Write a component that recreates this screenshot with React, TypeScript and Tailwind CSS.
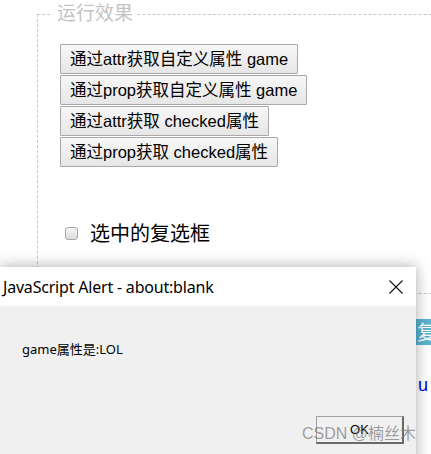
import React from "react";

const buttons = [
  "通过attr获取自定义属性 game",
  "通过prop获取自定义属性 game",
  "通过attr获取 checked属性",
  "通过prop获取 checked属性",
];

const cjk = { fontFamily: '"Liberation Sans", Arial, "Noto Sans CJK SC", sans-serif' };
const ui = { fontFamily: '"Noto Sans", "Open Sans", "Noto Sans CJK SC", sans-serif' };

export default function App() {
  return (
    <div className="relative w-[431px] h-[454px] overflow-hidden bg-white" style={cjk}>
      {/* page behind the alert */}
      <fieldset className="ml-[37px] mt-[2px] w-[460px] h-[292px] border border-dashed border-[#c8c8c8]">
        <legend className="ml-[15px] px-[4px] text-[19px] leading-[24px] text-[#c4c4c4]">运行效果</legend>
        <div className="pl-[22px] pt-[18px]">
          <div className="flex flex-col items-start gap-[1px]">
            {buttons.map((b) => (
              <button
                key={b}
                className="h-[30px] px-[9px] text-[16.5px] text-black border border-[#a9a9a9] bg-gradient-to-b from-[#f7f7f7] to-[#e6e6e6] rounded-[1px]"
              >
                {b}
              </button>
            ))}
          </div>
          <label className="flex items-center mt-[52px] ml-[5px] gap-[12px]">
            <span className="w-[13px] h-[13px] rounded-[3px] border border-[#a8a8a8] bg-gradient-to-b from-[#f4f4f4] to-[#dcdcdc]" />
            <span className="text-[20px] leading-[28px] text-black" style={{ fontFamily: '"Noto Sans CJK SC", sans-serif' }}>
              选中的复选框
            </span>
          </label>
        </div>
      </fieldset>
      <div className="ml-[416px] mt-[25px] flex flex-col items-start">
        <div className="w-[30px] h-[26px] bg-[#5ab4d2] text-white text-[20px] leading-[26px] pl-[1px]" style={{ fontFamily: '"Noto Sans CJK SC", sans-serif' }}>复</div>
        <div className="mt-[30px] pl-[2px] text-[18px] leading-[20px] text-[#0000ee]">u</div>
      </div>

      {/* alert dialog */}
      <div className="absolute left-0 top-[267px] w-[416px] h-[200px] bg-[#f0f0f0] shadow-[0_0_14px_rgba(0,0,0,0.35)] flex flex-col" style={ui}>
        <div className="h-[39px] bg-white flex items-center justify-between pl-[3px] pr-[13px]">
          <span className="text-[16px] text-black tracking-[-0.2px]">JavaScript Alert - about:blank</span>
          <svg width="14" height="14" viewBox="0 0 14 14" className="mt-[1px]">
            <path d="M0.5 0.5 L13.5 13.5 M13.5 0.5 L0.5 13.5" stroke="#111" strokeWidth="1.1" fill="none" />
          </svg>
        </div>
        <div className="pl-[22px] pt-[35px] text-[13px] leading-[16px] text-black" style={{ fontFamily: '"Noto Sans", "Noto Sans CJK SC", sans-serif' }}>
          game属性是:LOL
        </div>
        <div className="flex justify-end pr-[12px] mt-[59px]">
          <button className="w-[88px] h-[28px] bg-[#f0f0f0] border border-[#a0a0a0] border-r-2 border-b-2 border-r-[#696969] border-b-[#696969] text-[13px] text-black" style={{ fontFamily: '"Liberation Sans", Arial, sans-serif' }}>
            OK
          </button>
        </div>
      </div>

      {/* watermark */}
      <div className="absolute left-[302px] top-[423px] text-[16px] leading-[22px] text-[rgba(120,120,120,0.7)]" style={{ fontFamily: '"Liberation Sans", Arial, "Noto Sans CJK SC", sans-serif' }}>
        CSDN @楠丝木
      </div>
    </div>
  );
}
